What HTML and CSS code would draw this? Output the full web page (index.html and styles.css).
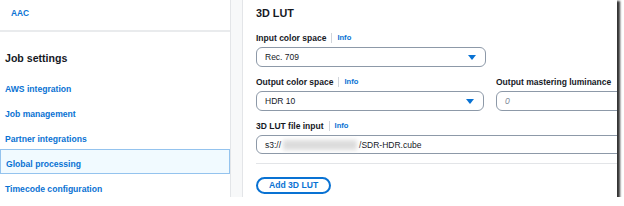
FILE: index.html
```html
<!DOCTYPE html>
<html>
<head>
	<title>Job settings - 3D LUT</title>
	<link rel="stylesheet" href="styles.css">
</head>
<body>
<div class="shot">

	<!-- left navigation -->
	<div class="side_nav">
		<div class="nav_top">
			<a class="nav_link sub_link">AAC</a>
		</div>
		<div class="nav_heading">Job settings</div>
		<ul class="nav_list">
			<li class="nav_item"><a class="nav_link">AWS integration</a></li>
			<li class="nav_item"><a class="nav_link">Job management</a></li>
			<li class="nav_item"><a class="nav_link">Partner integrations</a></li>
			<li class="nav_item nav_selected"><a class="nav_link">Global processing</a></li>
			<li class="nav_item"><a class="nav_link">Timecode configuration</a></li>
		</ul>
	</div>

	<div class="gutter"></div>

	<!-- 3D LUT form -->
	<div class="main_panel">
		<div class="panel_title">3D LUT</div>

		<div class="field">
			<div class="field_label">Input color space<span class="info_sep"></span><a class="info">Info</a></div>
			<div class="select_box">
				<span>Rec. 709</span>
				<span class="caret"></span>
			</div>
		</div>

		<div class="field_row">
			<div class="field">
				<div class="field_label">Output color space<span class="info_sep"></span><a class="info">Info</a></div>
				<div class="select_box">
					<span>HDR 10</span>
					<span class="caret"></span>
				</div>
			</div>
			<div class="field field_wide">
				<div class="field_label">Output mastering luminance</div>
				<div class="text_box placeholder">0</div>
			</div>
		</div>

		<div class="field">
			<div class="field_label">3D LUT file input<span class="info_sep"></span><a class="info">Info</a></div>
			<div class="text_box file_box">s3://<span class="redacted"></span>/SDR-HDR.cube</div>
		</div>

		<div class="divider"></div>

		<div class="add_btn">Add 3D LUT</div>
	</div>

</div>
</body>
</html>
```

FILE: styles.css
```css
body
{
	margin: 0;
	background-color: #FFFFFF;
	font-family: "Liberation Sans", Arial, sans-serif;
	color: #16191f;
}
.shot
{
	width: 617px;
	height: 197px;
	overflow: hidden;
	display: flex;
	background-color: #FFFFFF;
	box-shadow: 2px 2px 2px 1px rgba(30, 30, 30, 0.9);
}

/* sidebar */
.side_nav
{
	width: 231px;
	flex-shrink: 0;
	border-right: 1px solid #e3e5e8;
	box-sizing: border-box;
}
.nav_top
{
	height: 32px;
	padding-left: 11px;
	padding-top: 2px;
	box-sizing: border-box;
	border-bottom: 2px solid #e9ebed;
}
.nav_link
{
	color: #0972d3;
	font-weight: bold;
	font-size: 8.6px;
	text-decoration: none;
}
.sub_link
{
	font-size: 8.4px;
}
.nav_heading
{
	font-size: 10.6px;
	font-weight: bold;
	padding-left: 5px;
	margin-top: 19px;
	line-height: 14px;
}
.nav_list
{
	list-style: none;
	margin: 9px 0 0 0;
	padding: 0;
}
.nav_item
{
	height: 25px;
	line-height: 25px;
	padding-left: 5px;
	box-sizing: border-box;
}
.nav_selected
{
	background-color: #f1faff;
	border: 1px solid #94c3ee;
	line-height: 23px;
	padding-left: 5px;
}

.gutter
{
	width: 11px;
	flex-shrink: 0;
	background-color: #f7f8f9;
	border-right: 1px solid #e3e5e8;
}

/* form */
.main_panel
{
	flex: 1;
	padding-left: 13px;
	padding-top: 6px;
}
.panel_title
{
	font-size: 10.8px;
	font-weight: bold;
	line-height: 15px;
	margin-bottom: 11px;
}
.field
{
	width: 230px;
	margin-bottom: 9px;
}
.field_row
{
	display: flex;
	gap: 12px;
	width: 400px;
}
.field_wide
{
	width: 160px;
	flex-shrink: 0;
}
.field_label
{
	font-size: 8.5px;
	font-weight: bold;
	line-height: 12px;
	height: 12px;
	margin-bottom: 3px;
	white-space: nowrap;
	display: flex;
	align-items: center;
}
.info_sep
{
	display: inline-block;
	width: 1px;
	height: 10px;
	background-color: #d1d5db;
	margin: 0 5px 0 5px;
}
.info
{
	color: #0972d3;
	font-size: 7.6px;
	font-weight: bold;
}
.select_box
{
	height: 20px;
	border: 1px solid #8d99a8;
	border-radius: 6px;
	box-sizing: border-box;
	display: flex;
	align-items: center;
	justify-content: space-between;
	padding: 0 9px 0 8px;
	font-size: 8.5px;
}
.caret
{
	width: 0;
	height: 0;
	border-left: 4px solid transparent;
	border-right: 4px solid transparent;
	border-top: 5px solid #0972d3;
}
.text_box
{
	height: 20px;
	border: 1px solid #8d99a8;
	border-radius: 6px;
	box-sizing: border-box;
	display: flex;
	align-items: center;
	padding-left: 8px;
	font-size: 8.5px;
}
.placeholder
{
	color: #7d8998;
	font-style: italic;
}
.file_box
{
	width: 400px;
	height: 19px;
}
.redacted
{
	display: inline-block;
	width: 74px;
	height: 10px;
	background-color: #dcdcdc;
	filter: blur(2px);
	margin: 0 2px;
}
.divider
{
	width: 400px;
	height: 1px;
	background-color: #e3e5e8;
	margin-top: 1px;
	margin-bottom: 10px;
}
.add_btn
{
	display: inline-block;
	height: 17px;
	line-height: 13px;
	padding: 0 11px;
	border: 2px solid #0972d3;
	border-radius: 10px;
	box-sizing: border-box;
	color: #0972d3;
	font-weight: bold;
	font-size: 8.6px;
}
```
